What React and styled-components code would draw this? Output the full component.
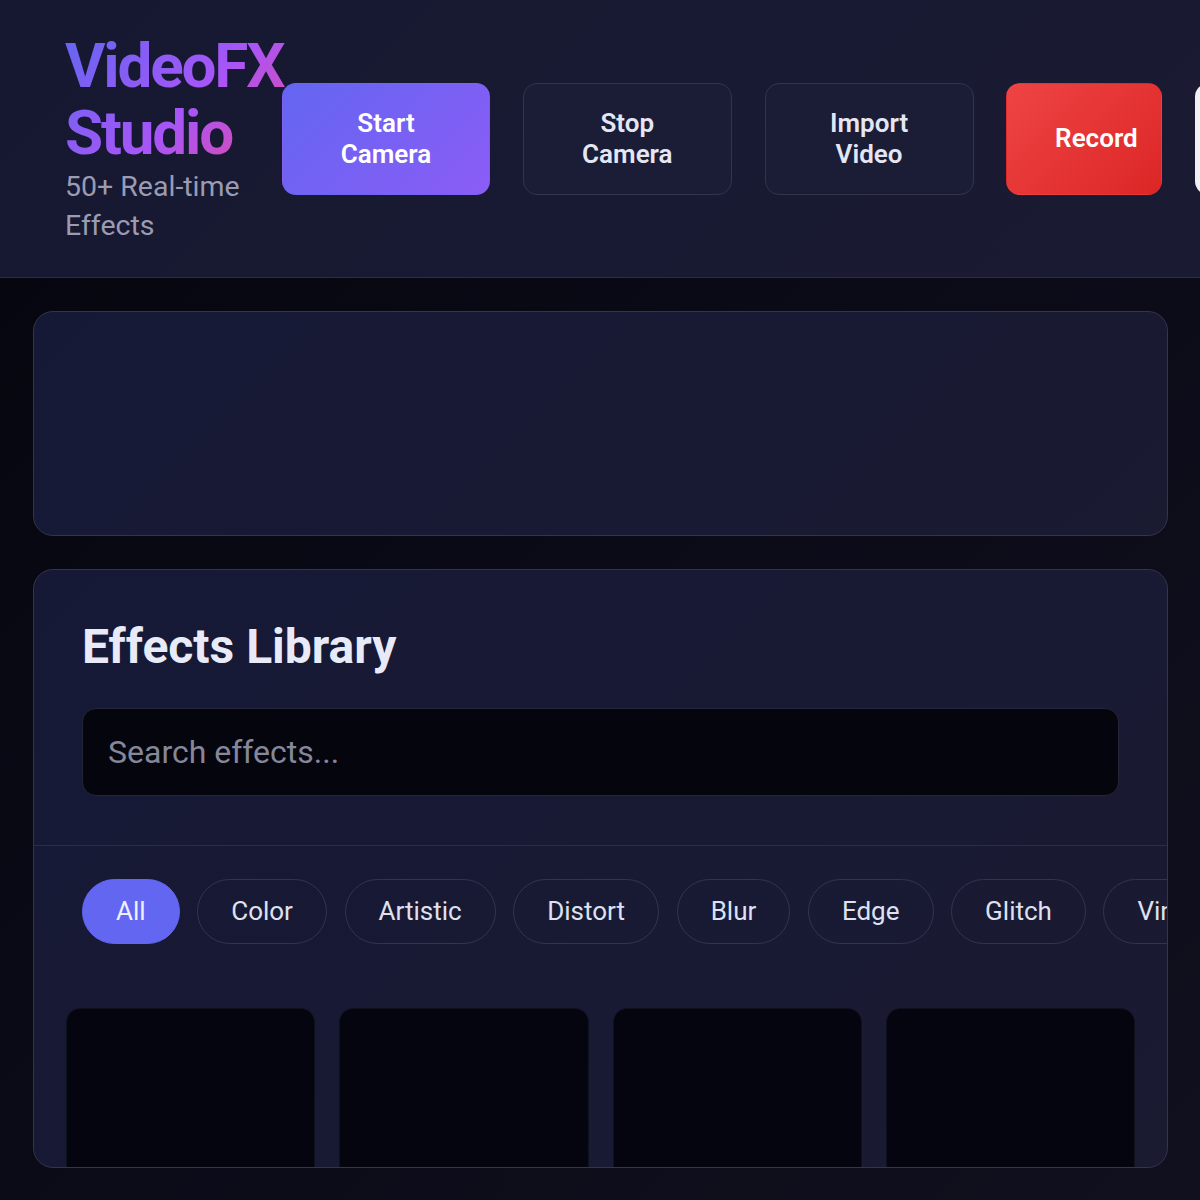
import React from "react";
import styled, { createGlobalStyle } from "styled-components";

const GlobalStyle = createGlobalStyle`
  * { box-sizing: border-box; }
  html, body { margin: 0; padding: 0; }
  body {
    background: #0a0a14;
    font-family: Roboto, "Noto Sans", "Liberation Sans", sans-serif;
    color: #e6e8f5;
    overflow: hidden;
  }
`;

const Page = styled.div`
  height: 100vh;
  display: flex;
  flex-direction: column;
  background: linear-gradient(135deg, #05050d 0%, #0b0b18 50%, #10101e 100%);
`;

const Header = styled.header`
  display: flex;
  align-items: center;
  padding: 32px 0 32px 65px;
  background: linear-gradient(135deg, #161831 0%, #1a1b33 100%);
  border-bottom: 1px solid #2c2d45;
  overflow: hidden;
  flex-shrink: 0;
`;

const Brand = styled.div`
  width: 217px;
  flex-shrink: 0;
  display: flex;
  flex-direction: column;
`;

const Title = styled.h1`
  margin: 0 0 2px;
  font-size: 62px;
  line-height: 67px;
  font-weight: 700;
  letter-spacing: -2.2px;
  white-space: nowrap;
  background: linear-gradient(135deg, #6366f1 0%, #a855f7 55%, #ec4899 100%);
  -webkit-background-clip: text;
  background-clip: text;
  color: transparent;
  width: 230px;
`;

const Subtitle = styled.p`
  margin: 0;
  font-size: 28.5px;
  line-height: 38.5px;
  color: #9a9cb2;
`;

const Controls = styled.div`
  display: flex;
  gap: 32.8px;
  flex-shrink: 0;
`;

const Button = styled.button`
  width: ${(p) => (p.$w ? `${p.$w}px` : "auto")};
  padding: ${(p) => (p.$pad ? p.$pad : "24px 36px")};
  border-radius: 14px;
  font-family: inherit;
  font-size: 26px;
  line-height: 31px;
  font-weight: 600;
  text-align: center;
  cursor: pointer;
  flex-shrink: 0;
  border: 1px solid
    ${(p) => (p.$variant === "ghost" ? "#32334d" : "transparent")};
  color: ${(p) => (p.$variant === "light" ? "#1a1b33" : p.$variant === "ghost" ? "#e4e6f4" : "#ffffff")};
  background: ${(p) =>
    p.$variant === "primary"
      ? "linear-gradient(135deg, #6366f1 0%, #8b5cf6 100%)"
      : p.$variant === "danger"
      ? "linear-gradient(135deg, #ef4444 0%, #dc2626 100%)"
      : p.$variant === "light"
      ? "#f1f1f4"
      : "#1b1c36"};
`;

const Main = styled.main`
  flex: 1;
  min-height: 0;
  display: flex;
  flex-direction: column;
  gap: 33px;
  padding: 33px 32px 32px 33px;
`;

const Panel = styled.section`
  border: 1px solid #33344d;
  border-radius: 20px;
  background: linear-gradient(135deg, #161936 0%, #1a1a31 100%);
  overflow: hidden;
  ${(p) => (p.$grow ? "flex: 1; min-height: 0;" : `height: ${p.$h}px; flex-shrink: 0;`)}
  display: flex;
  flex-direction: column;
`;

const LibraryTop = styled.div`
  padding: 48px 48px 49px;
  border-bottom: 1px solid #2c2d46;
  display: flex;
  flex-direction: column;
  gap: 32px;
`;

const LibraryTitle = styled.h2`
  margin: 0;
  font-size: 48px;
  line-height: 57.6px;
  font-weight: 700;
  color: #e8eaf7;
`;

const Search = styled.input`
  width: 100%;
  height: 88px;
  padding: 0 25px;
  border-radius: 14px;
  border: 1px solid #24253a;
  background: #05050e;
  font-family: inherit;
  font-size: 32px;
  color: #e6e8f5;
  outline: none;
  &::placeholder { color: #85879a; }
`;

const ChipRow = styled.div`
  display: flex;
  gap: 17.6px;
  padding: 33px 48px 32px;
  overflow: hidden;
  flex-shrink: 0;
`;

const Chip = styled.button`
  flex-shrink: 0;
  height: 65px;
  padding: 0 33px;
  border-radius: 999px;
  font-family: inherit;
  font-size: 26px;
  font-weight: 400;
  color: ${(p) => (p.$active ? "#eef0ff" : "#dfe1f0")};
  background: ${(p) => (p.$active ? "#6366f1" : "transparent")};
  border: 1px solid ${(p) => (p.$active ? "#6366f1" : "#33354f")};
`;

const Grid = styled.div`
  display: grid;
  grid-template-columns: repeat(4, 1fr);
  gap: 24px;
  padding: 32px;
`;

const Card = styled.div`
  height: 200px;
  border-radius: 14px;
  background: #05050f;
  border: 1px solid #10111f;
`;

const categories = ["All", "Color", "Artistic", "Distort", "Blur", "Edge", "Glitch", "Vintage", "Light"];

export default function App() {
  return (
    <>
      <GlobalStyle />
      <Page>
        <Header>
          <Brand>
            <Title>
              VideoFX
              <br />
              Studio
            </Title>
            <Subtitle>50+ Real-time Effects</Subtitle>
          </Brand>
          <Controls>
            <Button $variant="primary" $w={208}>Start Camera</Button>
            <Button $variant="ghost" $w={209}>Stop Camera</Button>
            <Button $variant="ghost" $w={209}>Import Video</Button>
            <Button $variant="danger" $w={156} $pad="24px 22px 24px 46px">Record</Button>
            <Button $variant="light" $w={200}>Snapshot</Button>
          </Controls>
        </Header>
        <Main>
          <Panel $h={225} />
          <Panel $grow>
            <LibraryTop>
              <LibraryTitle>Effects Library</LibraryTitle>
              <Search placeholder="Search effects..." />
            </LibraryTop>
            <ChipRow>
              {categories.map((c, i) => (
                <Chip key={c} $active={i === 0}>{c}</Chip>
              ))}
            </ChipRow>
            <Grid>
              {[0, 1, 2, 3].map((i) => (
                <Card key={i} />
              ))}
            </Grid>
          </Panel>
        </Main>
      </Page>
    </>
  );
}
